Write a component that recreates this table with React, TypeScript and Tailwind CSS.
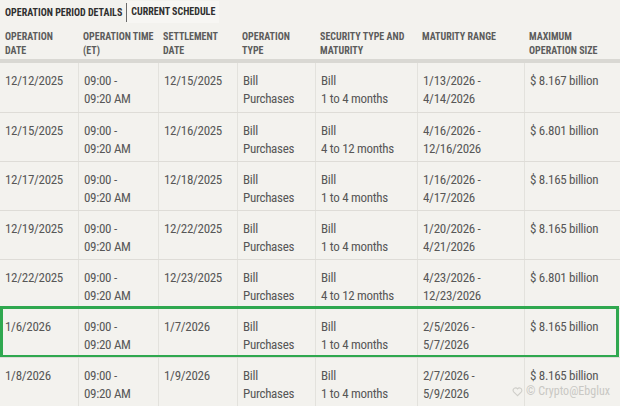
import React from 'react';

type Row = {
  date: string;
  time: [string, string];
  settle: string;
  type: [string, string];
  sec: [string, string];
  range: [string, string];
  size: string;
  highlight?: boolean;
};

const rows: Row[] = [
  { date: '12/12/2025', time: ['09:00 -', '09:20 AM'], settle: '12/15/2025', type: ['Bill', 'Purchases'], sec: ['Bill', '1 to 4 months'], range: ['1/13/2026 -', '4/14/2026'], size: '$ 8.167 billion' },
  { date: '12/15/2025', time: ['09:00 -', '09:20 AM'], settle: '12/16/2025', type: ['Bill', 'Purchases'], sec: ['Bill', '4 to 12 months'], range: ['4/16/2026 -', '12/16/2026'], size: '$ 6.801 billion' },
  { date: '12/17/2025', time: ['09:00 -', '09:20 AM'], settle: '12/18/2025', type: ['Bill', 'Purchases'], sec: ['Bill', '1 to 4 months'], range: ['1/16/2026 -', '4/17/2026'], size: '$ 8.165 billion' },
  { date: '12/19/2025', time: ['09:00 -', '09:20 AM'], settle: '12/22/2025', type: ['Bill', 'Purchases'], sec: ['Bill', '1 to 4 months'], range: ['1/20/2026 -', '4/21/2026'], size: '$ 8.165 billion' },
  { date: '12/22/2025', time: ['09:00 -', '09:20 AM'], settle: '12/23/2025', type: ['Bill', 'Purchases'], sec: ['Bill', '4 to 12 months'], range: ['4/23/2026 -', '12/23/2026'], size: '$ 6.801 billion' },
  { date: '1/6/2026', time: ['09:00 -', '09:20 AM'], settle: '1/7/2026', type: ['Bill', 'Purchases'], sec: ['Bill', '1 to 4 months'], range: ['2/5/2026 -', '5/7/2026'], size: '$ 8.165 billion', highlight: true },
  { date: '1/8/2026', time: ['09:00 -', '09:20 AM'], settle: '1/9/2026', type: ['Bill', 'Purchases'], sec: ['Bill', '1 to 4 months'], range: ['2/7/2026 -', '5/9/2026'], size: '$ 8.165 billion' },
];

const cols = ['w-[78px]', 'w-[80px]', 'w-[79px]', 'w-[78px]', 'w-[102px]', 'w-[107px]', 'flex-1'];

const headers: [string, string][] = [
  ['OPERATION', 'DATE'],
  ['OPERATION TIME', '(ET)'],
  ['SETTLEMENT', 'DATE'],
  ['OPERATION', 'TYPE'],
  ['SECURITY TYPE AND', 'MATURITY'],
  ['MATURITY RANGE', ''],
  ['MAXIMUM', 'OPERATION SIZE'],
];

const Cell = ({ i, lines }: { i: number; lines: string[] }) => (
  <div className={`${cols[i]} ${i > 0 ? 'border-l border-[#e3e2dd]' : ''} pl-[5px] pt-[9px] pb-[4px]`}>
    {lines.map((l, k) => (
      <div key={k} className="h-[18px] leading-[18px] whitespace-nowrap">
        {l}
      </div>
    ))}
  </div>
);

export default function App() {
  return (
    <div
      className="w-[620px] h-[406px] overflow-hidden bg-[#f3f2ee] text-[#575757]"
      style={{ fontFamily: '"Liberation Sans Narrow", "Roboto Condensed", "DejaVu Sans Condensed", "Liberation Sans", sans-serif' }}
    >
      <div className="flex h-[24px] items-center pl-[5px] text-[10px] font-bold text-[#2f2f2f]">
        <span className="pr-[4px]">OPERATION PERIOD DETAILS</span>
        <span className="h-[19px] w-px bg-[#6a6a6a]" />
        <span className="pl-[4px] pr-[4px] h-[22px] leading-[22px] bg-[#f7f6f3]">CURRENT SCHEDULE</span>
      </div>
      <div className="flex h-[35px] pt-[6px] text-[10px] font-bold text-[#5c5c5c] leading-[14px]">
        {headers.map((h, i) => (
          <div key={i} className={`${cols[i]} pl-[5px]`}>
            <div className="whitespace-nowrap">{h[0]}</div>
            <div className="whitespace-nowrap">{h[1]}</div>
          </div>
        ))}
      </div>
      <div className="h-[4px] bg-[#d9d8d3]" />
      <div className="text-[13px] tracking-[-0.3px]">
        {rows.map((r, idx) => (
          <div key={idx} className={`relative flex h-[49px] ${idx > 0 ? 'border-t border-[#dedcd7]' : ''}`}>
            <Cell i={0} lines={[r.date]} />
            <Cell i={1} lines={r.time} />
            <Cell i={2} lines={[r.settle]} />
            <Cell i={3} lines={r.type} />
            <Cell i={4} lines={r.sec} />
            <Cell i={5} lines={r.range} />
            <Cell i={6} lines={[r.size]} />
            {r.highlight && (
              <div className="absolute left-0 right-[1px] -top-[3px] -bottom-[1px] border-[3px] border-[#2fa84f]" />
            )}
          </div>
        ))}
      </div>
      <div className="relative">
        <div className="absolute right-[10px] -top-[24px] flex items-center gap-[3px] text-[12px] text-[#c9c8c4]">
          <svg width="11" height="11" viewBox="0 0 12 12" fill="none" stroke="#cfcec9" strokeWidth="1.2">
            <path d="M6 10.5 1.8 6.3a2.4 2.4 0 0 1 4.2-3.1 2.4 2.4 0 0 1 4.2 3.1z" />
          </svg>
          <span>© Crypto@Ebglux</span>
        </div>
      </div>
    </div>
  );
}
